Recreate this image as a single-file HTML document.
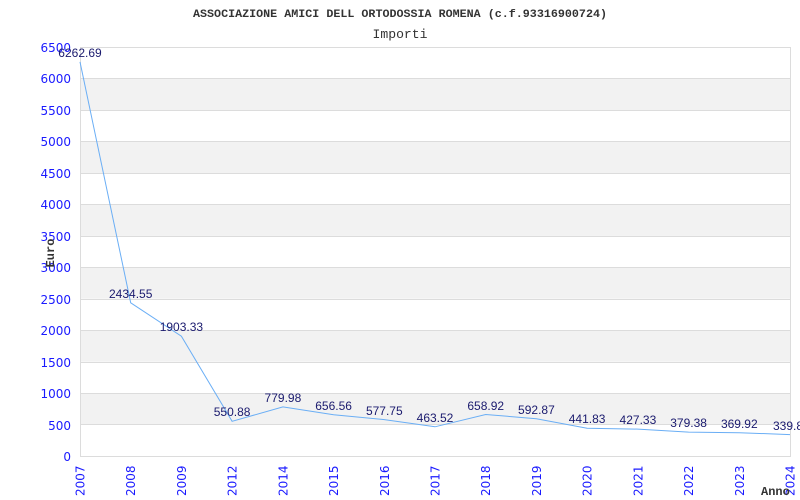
<!DOCTYPE html>
<html><head><meta charset="utf-8"><style>html,body{margin:0;padding:0;background:#fff;}svg{display:block}</style></head>
<body>
<svg width="800" height="500" xmlns="http://www.w3.org/2000/svg">
<rect width="800" height="500" fill="#fff"/>
<g fill="#f2f2f2">
<rect x="80" y="78.6" width="710" height="31.5"/>
<rect x="80" y="141.5" width="710" height="31.5"/>
<rect x="80" y="204.4" width="710" height="31.5"/>
<rect x="80" y="267.2" width="710" height="31.5"/>
<rect x="80" y="330.2" width="710" height="31.5"/>
<rect x="80" y="393.1" width="710" height="31.5"/>
</g>
<g stroke="#dcdcdc" stroke-width="1">
<line x1="80" x2="790" y1="47.5" y2="47.5"/>
<line x1="80" x2="790" y1="78.5" y2="78.5"/>
<line x1="80" x2="790" y1="110.5" y2="110.5"/>
<line x1="80" x2="790" y1="141.5" y2="141.5"/>
<line x1="80" x2="790" y1="173.5" y2="173.5"/>
<line x1="80" x2="790" y1="204.5" y2="204.5"/>
<line x1="80" x2="790" y1="236.5" y2="236.5"/>
<line x1="80" x2="790" y1="267.5" y2="267.5"/>
<line x1="80" x2="790" y1="299.5" y2="299.5"/>
<line x1="80" x2="790" y1="330.5" y2="330.5"/>
<line x1="80" x2="790" y1="362.5" y2="362.5"/>
<line x1="80" x2="790" y1="393.5" y2="393.5"/>
<line x1="80" x2="790" y1="424.5" y2="424.5"/>
<line x1="80" x2="790" y1="456.5" y2="456.5"/>
<line x1="80.5" x2="80.5" y1="47" y2="457"/>
<line x1="790.5" x2="790.5" y1="47" y2="457"/>
</g>
<text x="400" y="17" text-anchor="middle" font-family="Liberation Mono, monospace" font-weight="bold" font-size="11" fill="#333" textLength="414" lengthAdjust="spacingAndGlyphs">ASSOCIAZIONE AMICI DELL ORTODOSSIA ROMENA (c.f.93316900724)</text>
<text x="400" y="38" text-anchor="middle" font-family="Liberation Mono, monospace" font-size="13" fill="#333" textLength="55" lengthAdjust="spacingAndGlyphs">Importi</text>
<g font-family="DejaVu Sans, sans-serif" font-size="12" fill="#1a1aff" text-anchor="end">
<text x="71" y="52">6500</text><text x="71" y="83">6000</text><text x="71" y="115">5500</text>
<text x="71" y="146">5000</text><text x="71" y="178">4500</text><text x="71" y="209">4000</text>
<text x="71" y="241">3500</text><text x="71" y="272">3000</text><text x="71" y="304">2500</text>
<text x="71" y="335">2000</text><text x="71" y="367">1500</text><text x="71" y="398">1000</text>
<text x="71" y="430">500</text><text x="71" y="461">0</text>
</g>
<text transform="translate(54,253) rotate(-90)" text-anchor="middle" font-family="Liberation Mono, monospace" font-weight="bold" font-size="12" fill="#333">Euro</text>
<g font-family="DejaVu Sans, sans-serif" font-size="12" fill="#1a1aff">
<text transform="translate(84.5,496) rotate(-90)">2007</text>
<text transform="translate(135.2,496) rotate(-90)">2008</text>
<text transform="translate(185.9,496) rotate(-90)">2009</text>
<text transform="translate(236.6,496) rotate(-90)">2012</text>
<text transform="translate(287.4,496) rotate(-90)">2014</text>
<text transform="translate(338.1,496) rotate(-90)">2015</text>
<text transform="translate(388.8,496) rotate(-90)">2016</text>
<text transform="translate(439.5,496) rotate(-90)">2017</text>
<text transform="translate(490.2,496) rotate(-90)">2018</text>
<text transform="translate(540.9,496) rotate(-90)">2019</text>
<text transform="translate(591.6,496) rotate(-90)">2020</text>
<text transform="translate(642.4,496) rotate(-90)">2021</text>
<text transform="translate(693.1,496) rotate(-90)">2022</text>
<text transform="translate(743.8,496) rotate(-90)">2023</text>
<text transform="translate(794.5,496) rotate(-90)">2024</text>
</g>
<text x="761" y="495" font-family="Liberation Mono, monospace" font-weight="bold" font-size="12" fill="#333">Anno</text>
<polyline fill="none" stroke="#6aaef5" stroke-width="1" points="80,61.9 130.7,302.8 181.4,336.2 232.1,421.3 282.9,406.9 333.6,414.7 384.3,419.6 435,426.8 485.7,414.5 536.4,418.7 587.1,428.2 637.9,429.1 688.6,432.1 739.3,432.7 790,434.6"/>
<g font-family="Liberation Sans, sans-serif" font-size="12" fill="#1a1a6e" text-anchor="middle">
<text x="80" y="57">6262.69</text>
<text x="130.7" y="298">2434.55</text>
<text x="181.4" y="331">1903.33</text>
<text x="232.1" y="416">550.88</text>
<text x="282.9" y="402">779.98</text>
<text x="333.6" y="410">656.56</text>
<text x="384.3" y="415">577.75</text>
<text x="435" y="422">463.52</text>
<text x="485.7" y="410">658.92</text>
<text x="536.4" y="414">592.87</text>
<text x="587.1" y="423">441.83</text>
<text x="637.9" y="424">427.33</text>
<text x="688.6" y="427">379.38</text>
<text x="739.3" y="428">369.92</text>
<text x="788" y="430">339.8</text>
</g>
</svg>
</body></html>
